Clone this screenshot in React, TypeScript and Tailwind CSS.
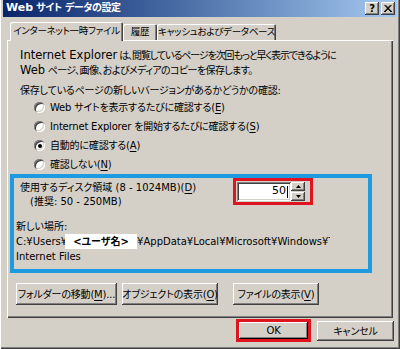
import React from "react";

const raised =
  "bg-[#d4d0c8] shadow-[inset_-1px_-1px_#404040,inset_1px_1px_#ffffff,inset_-2px_-2px_#808080,inset_2px_2px_#d4d0c8]";
const sunken =
  "shadow-[inset_1px_1px_#808080,inset_-1px_-1px_#ffffff,inset_2px_2px_#404040,inset_-2px_-2px_#d4d0c8]";

function Key({ k }: { k: string }) {
  return (
    <>
      (<span className="underline underline-offset-2">{k}</span>)
    </>
  );
}

function Radio({ checked, children }: { checked?: boolean; children: React.ReactNode }) {
  return (
    <div className="flex h-[19px] items-center pl-[26px]">
      <span
        className={`flex h-[11px] w-[11px] shrink-0 items-center justify-center rounded-full bg-white ${sunken}`}
      >
        {checked && <span className="h-[4px] w-[4px] rounded-full bg-black" />}
      </span>
      <span className="ml-[5px] whitespace-nowrap">{children}</span>
    </div>
  );
}

function Button({ children, className = "" }: { children: React.ReactNode; className?: string }) {
  return (
    <div className={`flex items-center justify-center whitespace-nowrap ${raised} ${className}`}>
      {children}
    </div>
  );
}

function TabLabel({ selected, className, children }: { selected?: boolean; className: string; children: React.ReactNode }) {
  return (
    <div
      className={`flex items-center justify-center rounded-t-[2px] text-[9.5px] tracking-[-0.3px] whitespace-nowrap shadow-[inset_1px_1px_#ffffff,inset_-1px_0_#404040,inset_-2px_0_#808080] ${
        selected ? "relative z-10 -mb-px h-[19px] bg-[#d4d0c8]" : "h-[16px]"
      } ${className}`}
    >
      {children}
    </div>
  );
}

export default function App() {
  return (
    <div className="flex h-[349px] w-[400px] flex-col overflow-hidden bg-[#d4d0c8] px-[3px] pb-[3px] text-[10px] tracking-[-0.2px] text-black shadow-[inset_1px_0_#ffffff,inset_-1px_-1px_#404040,inset_-2px_-2px_#808080] font-['DejaVu_Sans','Noto_Sans_CJK_JP',sans-serif] [font-feature-settings:'palt']">
      {/* title bar */}
      <div className="flex h-[17px] shrink-0 items-center bg-gradient-to-r from-[#0a246a] to-[#a6caf0] px-[2px]">
        <span className="pl-px text-[10px] font-bold tracking-[-0.4px] text-white">
          <span className="text-[11px] tracking-normal">Web</span> サイト データの設定
        </span>
        <div className="ml-auto flex gap-[2px]">
          <Button className="h-[13px] w-[14px] text-[10px] leading-none font-bold">?</Button>
          <Button className="h-[13px] w-[14px]">
            <svg width="8" height="7" viewBox="0 0 8 7">
              <path d="M0.5 0 L7 7 M1.5 0 L8 7 M7.5 0 L1 7 M6.5 0 L0 7" stroke="#000" strokeWidth="1" />
            </svg>
          </Button>
        </div>
      </div>

      {/* tabs */}
      <div className="mx-[4px] mt-[5px] flex items-end pl-[3px]">
        <TabLabel selected className="w-[113px]">
          インターネット一時ファイル
        </TabLabel>
        <TabLabel className="w-[34px]">履歴</TabLabel>
        <TabLabel className="w-[119px]">キャッシュおよびデータベース</TabLabel>
      </div>

      {/* panel */}
      <div className="mx-[4px] flex h-[278px] shrink-0 flex-col px-px pt-px shadow-[inset_1px_1px_#ffffff,inset_-1px_-1px_#404040,inset_-2px_-2px_#808080]">
        <div className="pt-[7px] pl-[12px] leading-[15px] whitespace-nowrap">
          <p className="tracking-[-1.1px]">
            <span className="text-[11.5px] tracking-normal">Internet Explorer</span> は、閲覧しているページを次回もっと早く表示できるように
          </p>
          <p className="tracking-[-0.6px]">
            <span className="text-[11.5px] tracking-normal">Web</span> ページ、画像、およびメディアのコピーを保存します。
          </p>
          <p className="mt-[5px]">保存しているページの新しいバージョンがあるかどうかの確認:</p>
        </div>
        <div>
          <Radio>
            Web サイトを表示するたびに確認する<Key k="E" />
          </Radio>
          <Radio>
            Internet Explorer を開始するたびに確認する<Key k="S" />
          </Radio>
          <Radio checked>
            自動的に確認する<Key k="A" />
          </Radio>
          <Radio>
            確認しない<Key k="N" />
          </Radio>
        </div>

        {/* highlighted area */}
        <div className="ml-[2px] h-[99px] w-[362px] border-4 border-[#1e9be0] tracking-normal">
          <div className="flex items-start">
            <div className="w-[219px] pt-[3px] pl-[6px] leading-[14px] whitespace-nowrap">
              <p>
                使用するディスク領域 (8 - 1024MB)<Key k="D" />
              </p>
              <p className="pl-[10px]">(推奨: 50 - 250MB)</p>
            </div>
            <div className="flex h-[27px] w-[80px] items-center border-[3px] border-[#e0141e] pl-px">
              <div className={`flex h-[19px] w-[54px] items-center justify-end bg-white pr-[3px] text-[11px] ${sunken}`}>
                50<span className="ml-px h-[12px] w-px bg-black" />
              </div>
              <div className="flex h-[19px] w-[14px] flex-col">
                <Button className="h-[9px] w-[14px]">
                  <svg width="5" height="3" viewBox="0 0 5 3">
                    <path d="M2.5 0 L5 3 L0 3 Z" fill="#000" />
                  </svg>
                </Button>
                <Button className="mt-px h-[9px] w-[14px]">
                  <svg width="5" height="3" viewBox="0 0 5 3">
                    <path d="M0 0 L5 0 L2.5 3 Z" fill="#000" />
                  </svg>
                </Button>
              </div>
            </div>
          </div>
          <div className="mt-[10px] pl-[2px] leading-[15px]">
            <p>新しい場所:</p>
            <p className="w-[314px] overflow-hidden whitespace-nowrap">
              C:¥Users¥
              <span className="-ml-[2px] inline-block w-[72px] bg-white text-center font-bold">
                &lt;ユーザ名&gt;
              </span>
              ¥AppData¥Local¥Microsoft¥Windows¥Temporary
            </p>
            <p>Internet Files</p>
          </div>
        </div>

        <div className="mt-[10px] flex pl-[8px]">
          <Button className="h-[22px] w-[101px]">
            フォルダーの移動<Key k="M" />...
          </Button>
          <Button className="ml-[5px] h-[22px] w-[96px]">
            オブジェクトの表示<Key k="O" />
          </Button>
          <Button className="ml-[15px] h-[22px] w-[86px]">
            ファイルの表示<Key k="V" />
          </Button>
        </div>
      </div>

      {/* dialog buttons */}
      <div className="mt-px flex items-start justify-end pr-[3px]">
        <div className="flex h-[23px] w-[75px] items-center justify-center border-[3px] border-[#e0141e]">
          <div className="flex h-[17px] w-[69px] items-center justify-center bg-[#d4d0c8] shadow-[inset_-1px_-1px_#000000,inset_1px_1px_#ffffff,inset_-2px_-2px_#808080]">
            OK
          </div>
        </div>
        <Button className="mt-[2px] ml-[6px] h-[20px] w-[77px]">キャンセル</Button>
      </div>
    </div>
  );
}
